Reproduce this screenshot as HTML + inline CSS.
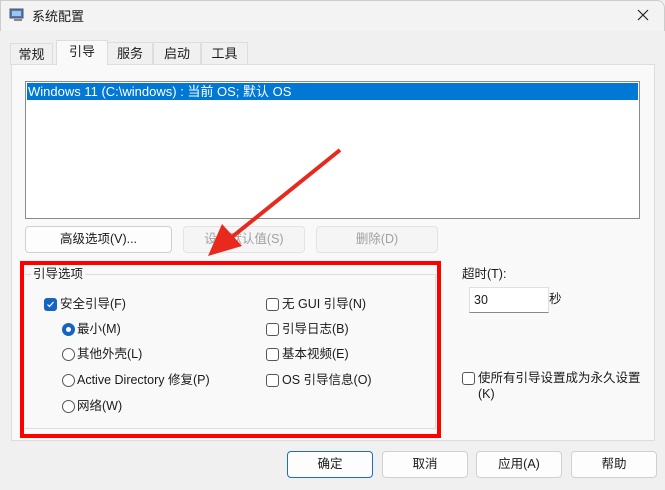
<!DOCTYPE html>
<html><head><meta charset="utf-8"><style>
*{box-sizing:border-box;margin:0;padding:0}
body{width:665px;height:490px;background:#f0f0f0;font-family:"Liberation Sans","Noto Sans CJK SC",sans-serif;font-size:12.5px;color:#1a1a1a;position:relative;overflow:hidden}
.a{position:absolute;white-space:nowrap}
.t{position:absolute;white-space:nowrap;line-height:15px}
.title{left:0;top:0;width:665px;height:31px;background:#f3f3f3;border-radius:0 8px 0 0;border:1px solid #ccc;border-bottom:none}
.tab{position:absolute;top:42px;height:22px;background:#f0f0f0;border:1px solid #ddd;border-bottom:none;text-align:center;line-height:22px;font-size:13px}
.btn{position:absolute;height:27px;background:#fdfdfd;border:1px solid #d0d0d0;border-radius:4px;text-align:center;line-height:25px}
.dis{color:#a0a0a0;background:#f5f5f5;border-color:#e3e3e3}
.cb{position:absolute;width:13px;height:13px;border:1px solid #555;border-radius:3px;background:#fff}
.rb{position:absolute;width:13px;height:13px;border:1px solid #555;border-radius:50%;background:#fff}
</style></head><body>
<div class="a title"></div>
<svg class="a" style="left:9px;top:7px" width="16" height="16"><rect x="1" y="2" width="13" height="9" fill="#4a78c0" stroke="#555"/><rect x="3" y="4" width="9" height="5" fill="#9cc6ee"/><rect x="5" y="12" width="8" height="2" fill="#888"/></svg>
<div class="a" style="left:32px;top:6px;font-size:13px">系统配置</div>
<svg class="a" style="left:637px;top:9px" width="12" height="12"><path d="M1 1L11 11M11 1L1 11" stroke="#222" stroke-width="1.2"/></svg>
<div class="tab" style="left:10px;width:43px;top:43px">常规</div>
<div class="tab" style="left:107px;width:46px">服务</div>
<div class="tab" style="left:153px;width:48px">启动</div>
<div class="tab" style="left:201px;width:47px">工具</div>
<div class="a" style="left:11px;top:64px;width:644px;height:377px;background:#f9f9f9;border:1px solid #ddd"></div>
<div class="tab" style="left:56px;width:52px;top:40px;height:25px;background:#f9f9f9;border-color:#ddd;line-height:22px">引导</div>
<div class="a" style="left:25px;top:81px;width:615px;height:138px;background:#fff;border:1px solid #8a8a8a"></div>
<div class="a" style="left:27px;top:83px;width:611px;height:17px;background:#0078d4;color:#fff;padding-left:1px;line-height:17px;font-size:13px">Windows 11 (C:\windows) : 当前 OS; 默认 OS</div>
<div class="btn" style="left:25px;top:226px;width:147px">高级选项(V)...</div>
<div class="btn dis" style="left:183px;top:226px;width:122px">设为默认值(S)</div>
<div class="btn dis" style="left:316px;top:226px;width:122px">删除(D)</div>
<div class="a" style="left:25px;top:274px;width:411px;height:155px;border-top:1px solid #ddd;border-bottom:1px solid #ddd;border-right:1px solid #ddd"></div>
<div class="t" style="left:31px;top:267px;background:#f9f9f9;padding:0 2px">引导选项</div>
<div class="a" style="left:20px;top:261px;width:421px;height:177px;border:4px solid #f00"></div>
<div class="cb" style="left:44px;top:298px;background:#1565c0;border-color:#1565c0"><svg width="11" height="11" style="position:absolute;left:0;top:0"><path d="M2.5 5.5l2 2 4-4.5" stroke="#fff" stroke-width="1.2" fill="none"/></svg></div>
<div class="t" style="left:60px;top:297px">安全引导(F)</div>
<div class="rb" style="left:62px;top:323px;border:4px solid #1565c0"></div><div class="t" style="left:77px;top:322px">最小(M)</div>
<div class="rb" style="left:62px;top:348px"></div><div class="t" style="left:77px;top:347px">其他外壳(L)</div>
<div class="rb" style="left:62px;top:374px"></div><div class="t" style="left:77px;top:373px">Active Directory 修复(P)</div>
<div class="rb" style="left:62px;top:400px"></div><div class="t" style="left:77px;top:399px">网络(W)</div>
<div class="cb" style="left:266px;top:298px"></div><div class="t" style="left:282px;top:297px">无 GUI 引导(N)</div>
<div class="cb" style="left:266px;top:323px"></div><div class="t" style="left:282px;top:322px">引导日志(B)</div>
<div class="cb" style="left:266px;top:348px"></div><div class="t" style="left:282px;top:347px">基本视频(E)</div>
<div class="cb" style="left:266px;top:374px"></div><div class="t" style="left:282px;top:373px">OS 引导信息(O)</div>
<div class="t" style="left:462px;top:267px">超时(T):</div>
<div class="a" style="left:469px;top:287px;width:80px;height:26px;background:#fff;border:1px solid #e0e0e0;border-bottom:1px solid #888;padding:5px 0 0 4px">30</div>
<div class="t" style="left:549px;top:292px">秒</div>
<div class="cb" style="left:462px;top:372px"></div>
<div class="a" style="left:478px;top:370px;line-height:16px">使所有引导设置成为永久设置<br>(K)</div>
<svg class="a" style="left:0;top:0" width="665" height="490"><line x1="340" y1="150" x2="232" y2="237" stroke="#e82a1e" stroke-width="4"/><polygon points="208,256 222,224 242,246" fill="#e82a1e"/></svg>
<div class="btn" style="left:287px;top:451px;width:86px;border:1px solid #1a6fc4">确定</div>
<div class="btn" style="left:382px;top:451px;width:86px">取消</div>
<div class="btn" style="left:476px;top:451px;width:86px">应用(A)</div>
<div class="btn" style="left:571px;top:451px;width:86px">帮助</div>
</body></html>
